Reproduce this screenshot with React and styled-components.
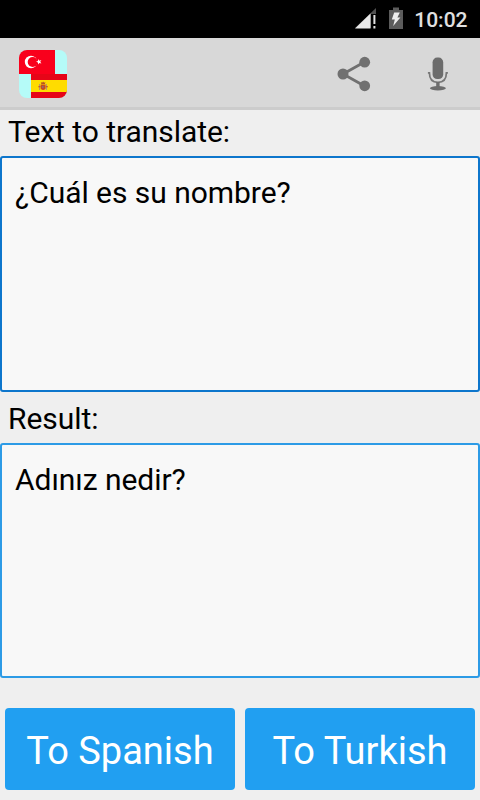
import React, { useState } from 'react';
import styled, { createGlobalStyle } from 'styled-components';

const GlobalStyle = createGlobalStyle`
  * {
    box-sizing: border-box;
  }

  body {
    margin: 0;
    background-color: #efefef;
    font-family: Roboto, sans-serif;
  }
`;

const Screen = styled.div`
  width: 480px;
  height: 800px;
  display: flex;
  flex-direction: column;
  overflow: hidden;
  background-color: #efefef;
`;

const StatusBar = styled.div`
  height: 38px;
  flex-shrink: 0;
  display: flex;
  align-items: center;
  justify-content: flex-end;
  padding-right: 12.5px;
  background-color: #000;

  svg + svg {
    margin-left: 12px;
  }
`;

const Clock = styled.span`
  margin-left: 11.5px;
  color: #e0e0e0;
  font-size: 21px;
  font-weight: 500;
  line-height: 38px;
  padding-top: 1px;
`;

const ActionBar = styled.header`
  height: 72px;
  flex-shrink: 0;
  display: flex;
  align-items: center;
  justify-content: space-between;
  padding: 3px 24px 0 19px;
  background-color: #d8d8d8;
  border-bottom: 3px solid #cccccc;
`;

const Actions = styled.div`
  display: flex;
  align-items: center;
  gap: 49px;
`;

const IconButton = styled.button`
  display: flex;
  padding: 0;
  background: none;
  border: none;
  cursor: pointer;
`;

const Label = styled.label`
  height: ${props => props.$height};
  flex-shrink: 0;
  padding: ${props => props.$padTop} 8px 0;
  color: #000;
  font-size: 30px;
  line-height: 35px;
  letter-spacing: -0.05px;
`;

const TextBox = styled.textarea`
  width: 100%;
  height: ${props => props.$height};
  flex-shrink: 0;
  display: block;
  padding: 17px 13px;
  background-color: #f8f8f8;
  border: 2px solid ${props => props.$color};
  border-radius: 3px;
  outline: none;
  resize: none;
  color: #000;
  font-family: inherit;
  font-size: 30px;
  line-height: 35px;
  letter-spacing: -0.04px;
`;

const ButtonRow = styled.div`
  display: grid;
  grid-template-columns: 1fr 1fr;
  gap: 10px;
  padding: 30px 5px 10px;
`;

const TranslateButton = styled.button`
  height: 82px;
  padding: 4px 0 0;
  background-color: #219ff1;
  border: none;
  border-radius: 4px;
  color: #fff;
  font-family: inherit;
  font-size: 38px;
  line-height: 46px;
  cursor: pointer;
`;

const SignalIcon = () => (
  <svg width="22" height="38" viewBox="0 0 22 38">
    <path d="M21 8v20H0z" fill="#505050" />
    <path d="M15.5 13.5v15H0z" fill="#e9e9e9" />
    <path d="M16 14h6v16h-6z" fill="#000" />
    <path d="M18.4 15h2v9h-2zM18.4 26h2v2.4h-2z" fill="#e0e0e0" />
  </svg>
);

const BatteryIcon = () => (
  <svg width="14" height="38" viewBox="0 0 14 38">
    <path d="M4 7.5h6V10h4v19H0V10h4z" fill="#5c5c5c" />
    <path d="M5.2 12.5h5.6l-2.4 5h3L4.2 26l1.6-6.4H2.8z" fill="#eee" />
  </svg>
);

const AppLogo = () => (
  <svg width="48" height="48" viewBox="0 0 48 48">
    <defs>
      <clipPath id="logo-shape">
        <rect width="48" height="48" rx="8" />
      </clipPath>
    </defs>
    <g clipPath="url(#logo-shape)">
      <rect width="48" height="48" fill="#b5fbf8" />
      {/* Turkey */}
      <rect width="36" height="24" fill="#f9001c" />
      <circle cx="12" cy="12" r="6.2" fill="#fff" />
      <circle cx="13.7" cy="12" r="5" fill="#f9001c" />
      <path d="M17 11.8l2-.7.1-2 1.3 1.6 2-.6-1.2 1.7 1.2 1.7-2-.6-1.3 1.6-.1-2z" fill="#fff" />
      {/* Spain */}
      <rect x="12" y="24" width="36" height="24" fill="#e60518" />
      <rect x="12" y="30" width="36" height="12" fill="#ffdc00" />
      <path d="M20 34h1.2v6H20zM26.8 34H28v6h-1.2z" fill="#b79a72" />
      <path d="M21.7 34.5h4.8v4.2q-2.4 2.4-4.8 0z" fill="#c54b22" />
      <path d="M22.3 34l-.5-2 1.3.7 1-1.2 1 1.2 1.3-.7-.5 2z" fill="#b85520" />
      <path d="M19.3 36.2h2.3v1h-2.3zM26.7 36.2H29v1h-2.3z" fill="#c74725" />
      <path d="M23 36h1.6v2H23z" fill="#8f6c73" />
    </g>
  </svg>
);

const ShareIcon = () => (
  <svg width="34" height="36" viewBox="0 0 34 36">
    <path d="M27.5 6L6 18l21.5 12" fill="none" stroke="#707070" strokeWidth="2.8" />
    <circle cx="6" cy="18" r="5.5" fill="#707070" />
    <circle cx="27.7" cy="6.2" r="5.4" fill="#707070" />
    <circle cx="27.7" cy="29.8" r="5.4" fill="#707070" />
  </svg>
);

const MicIcon = () => (
  <svg width="36" height="36" viewBox="0 0 36 36">
    <rect x="12.6" y="1.6" width="10.6" height="21.4" rx="4.6" fill="#6c6c6c" />
    <path d="M7.9 16.8h1.5q0 9.6 8.5 9.6t8.5-9.6h1.5" fill="none" stroke="#777" strokeWidth="1.7" />
    <path d="M16.2 26h3.4v5h-3.4z" fill="#6c6c6c" />
    <ellipse cx="17.9" cy="32.2" rx="8" ry="2.2" fill="#6c6c6c" />
  </svg>
);

const App = () => {
  const [text, setText] = useState('¿Cuál es su nombre?');

  return (
    <>
      <GlobalStyle />
      <Screen>
        <StatusBar>
          <SignalIcon />
          <BatteryIcon />
          <Clock>10:02</Clock>
        </StatusBar>
        <ActionBar>
          <AppLogo />
          <Actions>
            <IconButton aria-label="Share"><ShareIcon /></IconButton>
            <IconButton aria-label="Speak"><MicIcon /></IconButton>
          </Actions>
        </ActionBar>
        <Label htmlFor="source" $height="46px" $padTop="4px">Text to translate:</Label>
        <TextBox
          id="source"
          $height="236px"
          $color="#0d76cc"
          spellCheck={false}
          value={text}
          onChange={(e) => setText(e.target.value)}
        />
        <Label htmlFor="result" $height="51px" $padTop="9px">Result:</Label>
        <TextBox id="result" $height="235px" $color="#2d9be6" readOnly value="Adınız nedir?" />
        <ButtonRow>
          <TranslateButton>To Spanish</TranslateButton>
          <TranslateButton>To Turkish</TranslateButton>
        </ButtonRow>
      </Screen>
    </>
  );
};

export default App;
